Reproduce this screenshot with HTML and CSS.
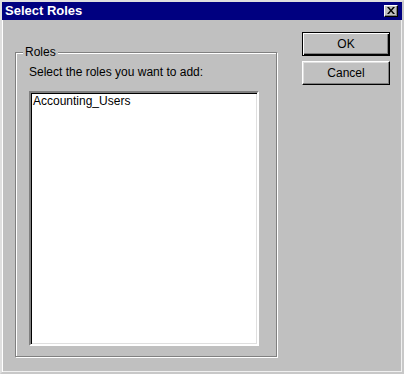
FILE: index.html
```html
<!DOCTYPE html>
<html lang="en">
<head>
  <meta charset="UTF-8">
  <title>Select Roles</title>
  <link rel="stylesheet" href="styles.css">
</head>
<body>
  <div class="window">
    <div class="titlebar">
      <span class="title">Select Roles</span>
      <button class="close" title="Close">
        <svg width="8" height="7" viewBox="0 0 8 7">
          <path d="M0 0h2l2 2.5L6 0h2L5 3.5 8 7H6L4 4.5 2 7H0l3-3.5z" fill="#000"/>
        </svg>
      </button>
    </div>

    <div class="content">
      <div class="group">
        <span class="group-label">Roles</span>
        <p class="hint">Select the roles you want to add:</p>
        <div class="listbox">
          <div class="list-item">Accounting_Users</div>
        </div>
      </div>

      <div class="actions">
        <button class="btn btn-default">OK</button>
        <button class="btn">Cancel</button>
      </div>
    </div>
  </div>
</body>
</html>
```

FILE: styles.css
```css
* {
  margin: 0;
  padding: 0;
  box-sizing: border-box;
}

body {
  font-family: "Liberation Sans", Arial, sans-serif;
  font-size: 12px;
  color: #000;
  background: #c0c0c0;
}

.window {
  width: 404px;
  height: 374px;
  background: #c0c0c0;
  border: 2px solid;
  border-color: #dfdfdf #c8c8c8 #c8c8c8 #dfdfdf;
  box-shadow: inset 1px 1px 0 #fff, inset -1px -1px 0 #f0f0f0;
}

/* title bar */
.titlebar {
  height: 18px;
  background: #000080;
  display: flex;
  align-items: center;
  justify-content: space-between;
  padding: 0 4px 0 3px;
}

.title {
  color: #fff;
  font-weight: bold;
  font-size: 13px;
  line-height: 18px;
}

.close {
  width: 14px;
  height: 12px;
  background: #c0c0c0;
  border: 1px solid;
  border-color: #fff #000 #000 #fff;
  box-shadow: inset -1px -1px 0 #808080;
  display: flex;
  align-items: center;
  justify-content: center;
  padding-bottom: 1px;
}

.close svg {
  display: block;
}

/* body */
.content {
  display: flex;
  align-items: flex-start;
}

.group {
  position: relative;
  width: 262px;
  height: 305px;
  margin: 32px 0 0 13px;
  border: 1px solid #808080;
  box-shadow: inset 1px 1px 0 #fff, 1px 1px 0 #fff;
  padding: 12px 0 0 13px;
}

.group-label {
  position: absolute;
  top: -8px;
  left: 7px;
  padding: 0 2px;
  background: #c0c0c0;
  line-height: 14px;
}

.hint {
  line-height: 14px;
  margin-bottom: 12px;
}

.listbox {
  width: 230px;
  height: 255px;
  background: #fff;
  border: 2px solid;
  border-color: #808080 #fff #fff #808080;
  box-shadow: inset 1px 1px 0 #000, inset -1px -1px 0 #dfdfdf;
  padding: 1px 2px;
}

.list-item {
  line-height: 14px;
}

/* buttons */
.actions {
  display: flex;
  flex-direction: column;
  gap: 5px;
  margin: 12px 0 0 25px;
}

.btn {
  width: 88px;
  height: 24px;
  font-family: inherit;
  font-size: 12px;
  background: #c0c0c0;
  border: 1px solid;
  border-color: #fff #000 #000 #fff;
  box-shadow: inset -1px -1px 0 #808080, inset 1px 1px 0 #dfdfdf;
}

.btn-default {
  border: 1px solid #000;
  box-shadow: inset 1px 1px 0 #fff, inset -1px -1px 0 #000, inset -2px -2px 0 #808080;
}
```
